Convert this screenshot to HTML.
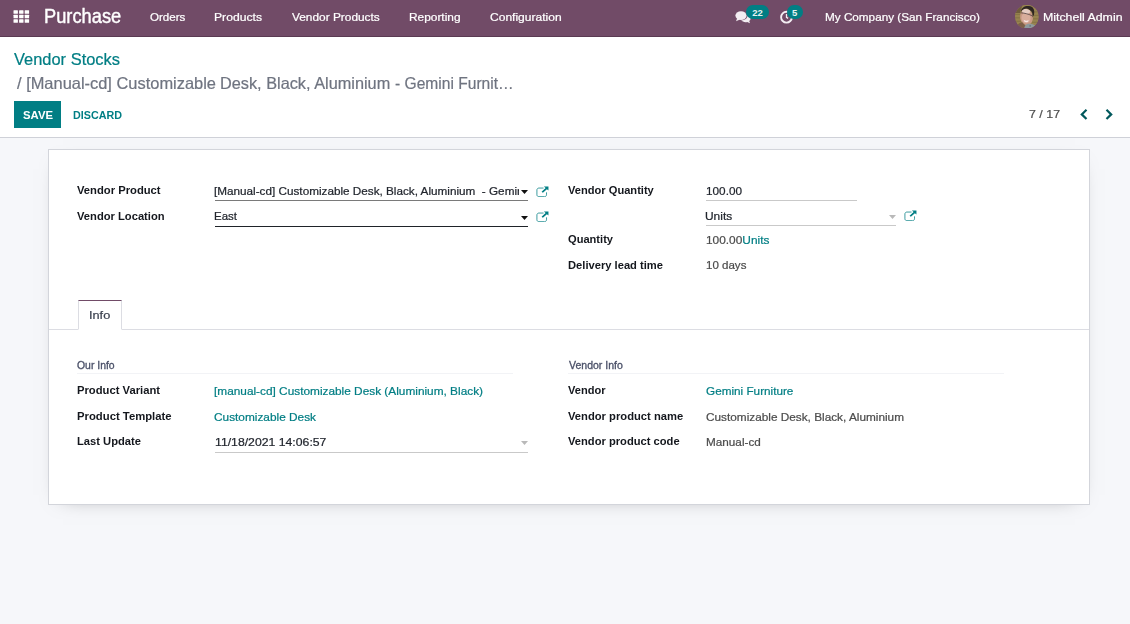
<!DOCTYPE html>
<html><head><meta charset="utf-8"><title>Vendor Stocks</title>
<style>
*{box-sizing:border-box;margin:0;padding:0}
html,body{width:1130px;height:624px;overflow:hidden;background:#f6f7fa;font-family:"Liberation Sans",sans-serif;font-size:13px;color:#4c4c4c}
.ab{position:absolute}
.tx{position:absolute;white-space:pre;line-height:1;transform-origin:0 0;-webkit-text-stroke:.22px}
#nav{position:absolute;left:0;top:0;width:1130px;height:37px;background:#714b67;border-bottom:1px solid #5a3a52}
#cp{position:absolute;left:0;top:37px;width:1130px;height:101px;background:#fff;border-bottom:1px solid #cfd1d8}
#sheet{position:absolute;left:48px;top:149px;width:1042px;height:356px;background:#fff;border:1px solid #d3d5db;box-shadow:0 5px 20px -15px rgba(0,0,0,.5)}
.ul{position:absolute;height:1px}
.badge{position:absolute;background:#017e84;color:#fff;font-weight:bold;font-size:9.5px;line-height:15.5px;text-align:center;border-radius:7.500px;color:#e6f2f2}
</style></head><body>
<div id="nav"></div>
<div id="cp"></div>
<div id="sheet"></div>
<!-- navbar icons -->
<svg class="ab" style="left:13px;top:10px" width="17" height="13" viewBox="0 0 17 13"><g fill="#fff"><rect x="0.500" y="0.300" width="4.400" height="3.400" rx=".5"/><rect x="6.100" y="0.300" width="4.400" height="3.400" rx=".5"/><rect x="11.700" y="0.300" width="4.400" height="3.400" rx=".5"/><rect x="0.500" y="4.800" width="4.400" height="3.400" rx=".5"/><rect x="6.100" y="4.800" width="4.400" height="3.400" rx=".5"/><rect x="11.700" y="4.800" width="4.400" height="3.400" rx=".5"/><rect x="0.500" y="9.300" width="4.400" height="3.400" rx=".5"/><rect x="6.100" y="9.300" width="4.400" height="3.400" rx=".5"/><rect x="11.700" y="9.300" width="4.400" height="3.400" rx=".5"/></g></svg>
<svg class="ab" style="left:735px;top:11px" width="16" height="13" viewBox="0 0 16 13"><ellipse cx="6" cy="4.600" rx="5.600" ry="4.300" fill="#f3edf2"/><path d="M2.200 7.200L1 10.200l4-1.700z" fill="#f3edf2"/><path d="M12.600 4.200c1.800.6 3 1.900 3 3.400 0 1-.5 1.900-1.400 2.500l.8 2.200-2.800-1.300c-.5.100-1 .2-1.600.2-1.900 0-3.500-.8-4.400-1.900 3.400-.2 6.500-2 6.400-5.100z" fill="#f3edf2"/></svg>
<div class="badge" style="left:746px;top:4.500px;width:23px;height:14.500px">22</div>
<svg class="ab" style="left:779px;top:10px" width="15" height="15" viewBox="0 0 15 15"><circle cx="7.500" cy="7.200" r="5.400" fill="none" stroke="#f3edf2" stroke-width="1.900"/><path d="M7.500 4v3.400l1.600 1" fill="none" stroke="#f3edf2" stroke-width="1.300"/></svg>
<div class="badge" style="left:786.500px;top:4.500px;width:16.500px;height:14.500px">5</div>
<!-- avatar -->
<svg class="ab" style="left:1014.900px;top:4.600px" width="23.700" height="23.700" viewBox="0 0 24 24"><defs><clipPath id="av"><circle cx="12" cy="12" r="11.900"/></clipPath><filter id="bl" x="-10%" y="-10%" width="120%" height="120%"><feGaussianBlur stdDeviation=".75"/></filter></defs><g clip-path="url(#av)"><rect width="24" height="24" fill="#937f4e"/><g filter="url(#bl)"><rect x="-2" y="-2" width="28" height="28" fill="#978350"/><path d="M-1 -1h9l-3 9h-6z" fill="#6e5c3a"/><path d="M0 9.500h5M0 13h5M0 16.500h6M18.500 10.500h6M18 14h6M17 17.500h7M19 7h5" stroke="#7d6a3e" stroke-width=".7"/><ellipse cx="11.600" cy="12.300" rx="6.500" ry="8" transform="rotate(-10 12 12)" fill="#c99985"/><ellipse cx="11.200" cy="13" rx="4.600" ry="5.500" fill="#d8ad9c"/><ellipse cx="11.300" cy="6.300" rx="4.300" ry="2.300" transform="rotate(8 11 6)" fill="#e6cdc4"/><path d="M6 6.500C6.500 2.500 10 .6 14 1c4.500.5 6.300 3.600 5.200 9l-1.500 2.600c.3-3.600-.2-5.800-1.800-6.700-1.500-.9-2.500-2.400-4.400-2.400-2 0-3.800 1.200-5.500 3z" fill="#2e2622"/><path d="M5.800 7.900c3.600.2 7.600 1.200 11.400 2.900" stroke="#4a3e40" stroke-width=".9" fill="none" opacity=".85"/><path d="M8.800 15c1.500 1.200 3.600 1.300 5 .3l-.5 1.600c-1.300.8-2.900.6-4-.3z" fill="#f6e6e4"/><path d="M1.500 22c1.200-2.800 3.500-4 5.800-4.500l2.600 2.800 1 5H0z" fill="#7d5e48"/><path d="M9.200 24.500c.2-2.800 1.400-4.600 3.400-5.200 3.600-1 7.400.3 9.600 3.200l-2 3z" fill="#8d999e"/><circle cx="15.300" cy="21.200" r=".6" fill="#4a5256"/></g></g></svg>
<!-- pager chevrons -->
<svg class="ab" style="left:1079px;top:108px" width="10" height="13" viewBox="0 0 10 13"><path d="M7.500 1.800L2.800 6.400l4.700 4.600" fill="none" stroke="#01585c" stroke-width="2.200"/></svg>
<svg class="ab" style="left:1104px;top:108px" width="10" height="13" viewBox="0 0 10 13"><path d="M2.500 1.800l4.700 4.600-4.700 4.600" fill="none" stroke="#01585c" stroke-width="2.200"/></svg>
<!-- save btn -->
<div class="ab" style="left:14px;top:101px;width:47px;height:27px;background:#017e84"></div>
<!-- field underlines -->
<div class="ul" style="left:215px;top:200px;width:313px;background:#7a7a7a"></div>
<div class="ul" style="left:215px;top:226px;width:313px;background:#1f2329"></div>
<div class="ul" style="left:706px;top:200px;width:151px;background:#c9c9c9"></div>
<div class="ul" style="left:706px;top:225px;width:190px;background:#c9c9c9"></div>
<div class="ul" style="left:215px;top:452px;width:313px;background:#c9c9c9"></div>
<svg class="ab" style="left:520.5px;top:190px" width="7" height="4" viewBox="0 0 7 4"><path d="M0 0h7L3.500 4z" fill="#111"/></svg><svg class="ab" style="left:520.5px;top:215.6px" width="7" height="4" viewBox="0 0 7 4"><path d="M0 0h7L3.500 4z" fill="#111"/></svg><svg class="ab" style="left:889px;top:215px" width="7" height="4" viewBox="0 0 7 4"><path d="M0 0h7L3.500 4z" fill="#b9b9b9"/></svg><svg class="ab" style="left:520.5px;top:441px" width="7" height="4" viewBox="0 0 7 4"><path d="M0 0h7L3.500 4z" fill="#b9b9b9"/></svg>
<svg class="ab" style="left:535.6px;top:185.6px" width="13" height="11" viewBox="0 0 14.2 13.4" preserveAspectRatio="none"><path d="M11.5 8.2v2.6c0 1.2-1 2.2-2.2 2.2H3.2C2 13 1 12 1 10.800V4.700c0-1.200 1-2.200 2.200-2.200h4.600" fill="none" stroke="#2a9297" stroke-width="1.05" stroke-linecap="round"/><path d="M8.6 0.600h5.000v5.000l-1.700-1.700-4.400 4.400-1.400-1.400 4.400-4.400z" fill="#017e84"/></svg><svg class="ab" style="left:535.6px;top:211.1px" width="13" height="11" viewBox="0 0 14.2 13.4" preserveAspectRatio="none"><path d="M11.5 8.2v2.6c0 1.2-1 2.2-2.2 2.2H3.2C2 13 1 12 1 10.800V4.700c0-1.200 1-2.200 2.200-2.200h4.600" fill="none" stroke="#2a9297" stroke-width="1.05" stroke-linecap="round"/><path d="M8.6 0.600h5.000v5.000l-1.700-1.700-4.400 4.400-1.400-1.400 4.400-4.400z" fill="#017e84"/></svg><svg class="ab" style="left:904.3px;top:210.2px" width="13" height="11" viewBox="0 0 14.2 13.4" preserveAspectRatio="none"><path d="M11.5 8.2v2.6c0 1.2-1 2.2-2.2 2.2H3.2C2 13 1 12 1 10.800V4.700c0-1.200 1-2.200 2.200-2.200h4.600" fill="none" stroke="#2a9297" stroke-width="1.05" stroke-linecap="round"/><path d="M8.6 0.600h5.000v5.000l-1.700-1.700-4.400 4.400-1.400-1.400 4.400-4.400z" fill="#017e84"/></svg>
<!-- clipped m2o input -->
<div class="ab" style="left:214.400px;top:183px;width:304.600px;height:16px;overflow:hidden"><div class="tx" id="v1" style="left:0;top:2px;font-size:11.6px;color:#22262e;transform:scaleX(1.0114)">[Manual-cd] Customizable Desk, Black, Aluminium  - Gemini Furniture</div></div>
<!-- tabs -->
<div class="ul" style="left:49px;top:329px;width:1040px;background:#dcdde3"></div>
<div class="ab" style="left:78px;top:300px;width:44px;height:30px;background:#fff;border:1px solid #dcdde3;border-top-color:#714b67;border-bottom-color:#fff"></div>
<!-- separators -->
<div class="ul" style="left:77px;top:373px;width:436px;background:#f2f3f6"></div>
<div class="ul" style="left:568px;top:373px;width:436px;background:#f2f3f6"></div>
<div class="tx" id="brand" style="left:44.00px;top:7.00px;font-size:19.3px;font-weight:normal;color:#fff;transform:scaleX(0.9476);-webkit-text-stroke:.4px;">Purchase</div>
<div class="tx" id="m1" style="left:150.00px;top:11.00px;font-size:11.6px;font-weight:normal;color:#fff;transform:scaleX(0.9989);">Orders</div>
<div class="tx" id="m2" style="left:214.00px;top:11.00px;font-size:11.6px;font-weight:normal;color:#fff;transform:scaleX(1.0488);">Products</div>
<div class="tx" id="m3" style="left:292.00px;top:11.00px;font-size:11.6px;font-weight:normal;color:#fff;transform:scaleX(1.0242);">Vendor Products</div>
<div class="tx" id="m4" style="left:409.00px;top:11.00px;font-size:11.6px;font-weight:normal;color:#fff;transform:scaleX(1.0242);">Reporting</div>
<div class="tx" id="m5" style="left:490.00px;top:11.00px;font-size:11.6px;font-weight:normal;color:#fff;transform:scaleX(1.0382);">Configuration</div>
<div class="tx" id="comp" style="left:825.00px;top:11.00px;font-size:11.6px;font-weight:normal;color:#fff;transform:scaleX(1.0108);">My Company (San Francisco)</div>
<div class="tx" id="user" style="left:1043.00px;top:11.00px;font-size:11.6px;font-weight:normal;color:#fff;transform:scaleX(1.0635);">Mitchell Admin</div>
<div class="tx" id="bc1" style="left:14.00px;top:51.00px;font-size:16.5px;font-weight:normal;color:#017e84;transform:scaleX(0.9962);">Vendor Stocks</div>
<div class="tx" id="bc2a" style="left:17.00px;top:75.00px;font-size:16.5px;font-weight:normal;color:#6f7480;transform:scaleX(0.9954);">/ [Manual-cd] Customizable</div>
<div class="tx" id="bc2b" style="left:220.00px;top:75.00px;font-size:16.5px;font-weight:normal;color:#6f7480;transform:scaleX(0.9875);">Desk, Black, Aluminium</div>
<div class="tx" id="bc2c" style="left:395.00px;top:75.00px;font-size:16.5px;font-weight:normal;color:#6f7480;transform:scaleX(0.9444);">- Gemini Furnit…</div>
<div class="tx" id="save" style="left:23.00px;top:110.00px;font-size:10.8px;font-weight:bold;color:#fff;transform:scaleX(1.0486);-webkit-text-stroke:0;">SAVE</div>
<div class="tx" id="disc" style="left:73.00px;top:110.00px;font-size:10.8px;font-weight:bold;color:#017e84;transform:scaleX(0.9962);-webkit-text-stroke:0;">DISCARD</div>
<div class="tx" id="pg" style="left:1029.00px;top:108.00px;font-size:11.6px;font-weight:normal;color:#4c4c4c;transform:scaleX(1.0718);">7 / 17</div>
<div class="tx" id="l1" style="left:77.00px;top:184.00px;font-size:11.6px;font-weight:bold;color:#14171d;transform:scaleX(0.9684);-webkit-text-stroke:0;">Vendor Product</div>
<div class="tx" id="l2" style="left:77.00px;top:210.00px;font-size:11.6px;font-weight:bold;color:#14171d;transform:scaleX(0.9645);-webkit-text-stroke:0;">Vendor Location</div>
<div class="tx" id="l3" style="left:568.00px;top:184.00px;font-size:11.6px;font-weight:bold;color:#14171d;transform:scaleX(0.9582);-webkit-text-stroke:0;">Vendor Quantity</div>
<div class="tx" id="l4" style="left:568.00px;top:233.00px;font-size:11.6px;font-weight:bold;color:#14171d;transform:scaleX(0.9568);-webkit-text-stroke:0;">Quantity</div>
<div class="tx" id="l5" style="left:568.00px;top:259.00px;font-size:11.6px;font-weight:bold;color:#14171d;transform:scaleX(0.9634);-webkit-text-stroke:0;">Delivery lead time</div>
<div class="tx" id="l6" style="left:77.00px;top:384.00px;font-size:11.6px;font-weight:bold;color:#14171d;transform:scaleX(0.9686);-webkit-text-stroke:0;">Product Variant</div>
<div class="tx" id="l7" style="left:77.00px;top:410.00px;font-size:11.6px;font-weight:bold;color:#14171d;transform:scaleX(0.9746);-webkit-text-stroke:0;">Product Template</div>
<div class="tx" id="l8" style="left:77.00px;top:435.00px;font-size:11.6px;font-weight:bold;color:#14171d;transform:scaleX(0.9644);-webkit-text-stroke:0;">Last Update</div>
<div class="tx" id="l9" style="left:568.00px;top:384.00px;font-size:11.6px;font-weight:bold;color:#14171d;transform:scaleX(0.9547);-webkit-text-stroke:0;">Vendor</div>
<div class="tx" id="l10" style="left:568.00px;top:410.00px;font-size:11.6px;font-weight:bold;color:#14171d;transform:scaleX(0.9665);-webkit-text-stroke:0;">Vendor product name</div>
<div class="tx" id="l11" style="left:568.00px;top:435.00px;font-size:11.6px;font-weight:bold;color:#14171d;transform:scaleX(0.9625);-webkit-text-stroke:0;">Vendor product code</div>
<div class="tx" id="v2" style="left:214.00px;top:210.00px;font-size:11.6px;font-weight:normal;color:#22262e;transform:scaleX(0.9912);">East</div>
<div class="tx" id="v3" style="left:706.00px;top:185.00px;font-size:11.6px;font-weight:normal;color:#22262e;transform:scaleX(1.0150);">100.00</div>
<div class="tx" id="v4" style="left:705.00px;top:210.00px;font-size:11.6px;font-weight:normal;color:#22262e;transform:scaleX(1.0295);">Units</div>
<div class="tx" id="v5" style="left:706.00px;top:234.00px;font-size:11.6px;font-weight:normal;color:#4c4c4c;transform:scaleX(1.0244);">100.00<span style="color:#017e84">Units</span></div>
<div class="tx" id="v6" style="left:706.00px;top:259.00px;font-size:11.6px;font-weight:normal;color:#4c4c4c;transform:scaleX(0.9948);">10 days</div>
<div class="tx" id="v7" style="left:214.00px;top:385.00px;font-size:11.6px;font-weight:normal;color:#017e84;transform:scaleX(1.0208);">[manual-cd] Customizable Desk (Aluminium, Black)</div>
<div class="tx" id="v8" style="left:214.00px;top:411.00px;font-size:11.6px;font-weight:normal;color:#017e84;transform:scaleX(1.0213);">Customizable Desk</div>
<div class="tx" id="v9" style="left:215.00px;top:436.00px;font-size:11.6px;font-weight:normal;color:#22262e;transform:scaleX(1.0558);">11/18/2021 14:06:57</div>
<div class="tx" id="v10" style="left:706.00px;top:385.00px;font-size:11.6px;font-weight:normal;color:#017e84;transform:scaleX(1.0122);">Gemini Furniture</div>
<div class="tx" id="v11" style="left:706.00px;top:411.00px;font-size:11.6px;font-weight:normal;color:#4c4c4c;transform:scaleX(1.0175);">Customizable Desk, Black, Aluminium</div>
<div class="tx" id="v12" style="left:706.00px;top:436.00px;font-size:11.6px;font-weight:normal;color:#4c4c4c;transform:scaleX(1.0122);">Manual-cd</div>
<div class="tx" id="tab" style="left:89.00px;top:309.00px;font-size:11.6px;font-weight:normal;color:#3c4250;transform:scaleX(1.0960);">Info</div>
<div class="tx" id="s1" style="left:77.00px;top:361.00px;font-size:10.3px;font-weight:normal;color:#4a5068;transform:scaleX(1.0107);-webkit-text-stroke:.3px #4a5068;">Our Info</div>
<div class="tx" id="s2" style="left:569.00px;top:361.00px;font-size:10.3px;font-weight:normal;color:#4a5068;transform:scaleX(1.0213);-webkit-text-stroke:.3px #4a5068;">Vendor Info</div>
</body></html>
